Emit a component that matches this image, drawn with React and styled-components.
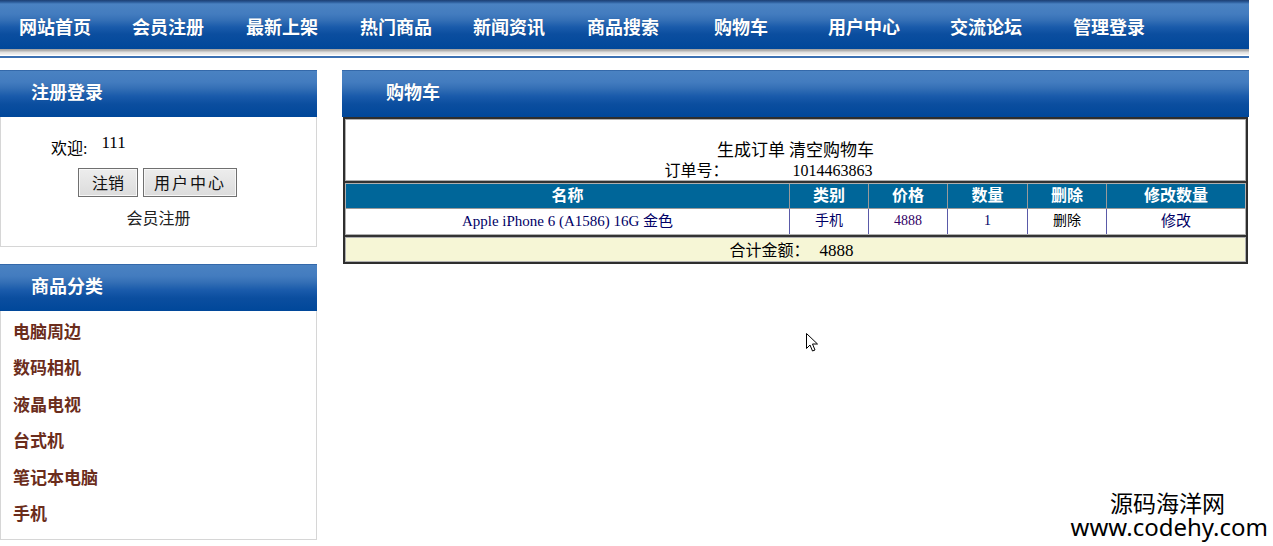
import React from "react";
import styled, { createGlobalStyle } from "styled-components";

const Global = createGlobalStyle`
  html, body { margin: 0; padding: 0; background: #fff; }
  body { font-family: "Liberation Serif", "Noto Sans CJK SC", serif; color: #000; }
`;

const Page = styled.div`
  position: relative;
  width: 1273px;
  height: 546px;
  overflow: hidden;
`;

const Top = styled.div`
  width: 1249px;
`;

const NavBar = styled.nav`
  height: 49px;
  display: flex;
  align-items: center;
  padding-left: 19px;
  box-sizing: border-box;
  background: linear-gradient(
    #1d3f72 0px, #2a5a98 2px, #4a82c2 4px, #437cbf 14px, #3570b6 20px,
    #1a5bab 27px, #0b4e9f 34px, #00479a 49px
  );
`;

const NavItem = styled.a`
  flex: none;
  width: ${(p) => p.$w}px;
  color: #fff;
  font-size: 18px;
  font-weight: bold;
  text-decoration: none;
  white-space: nowrap;
  padding-top: 3px;
  text-shadow: 0 0 1px rgba(0, 0, 0, 0.2);
`;

const Strip = styled.div`
  height: 9px;
  background: linear-gradient(
    #9c9c9c 0px, #b8b8b8 2px, #dcdcdc 3px, #ececec 5px, #f4f4f4 6px,
    #ffffff 6px, #ffffff 7px, #3b70b2 7px, #3b70b2 9px
  );
`;

const Content = styled.div`
  display: flex;
  gap: 25px;
  margin-top: 12px;
  width: 1249px;
`;

const Sidebar = styled.aside`
  width: 317px;
  display: flex;
  flex-direction: column;
  gap: 17px;
`;

const PanelHead = styled.div`
  height: 47px;
  display: flex;
  align-items: center;
  padding-left: ${(p) => p.$pad}px;
  padding-bottom: 5px;
  color: #fff;
  font-size: 18px;
  font-weight: bold;
  background: linear-gradient(
    #1d4f92 0px, #4a82c2 1px, #437cbf 12px, #3570b6 18px,
    #1a5bab 26px, #0b4e9f 34px, #00479a 47px
  );
  box-sizing: border-box;
  text-shadow: 0 0 1px rgba(0, 0, 0, 0.2);
`;

const SideBody = styled.div`
  height: ${(p) => p.$h}px;
  box-sizing: border-box;
  border: 1px solid #d6d6d6;
  border-top: none;
`;

const LoginBody = styled(SideBody)`
  display: flex;
  flex-direction: column;
  align-items: center;
  padding-top: 16px;
`;

const WelcomeRow = styled.div`
  display: flex;
  align-items: flex-start;
  width: 100%;
  padding-left: 50px;
  box-sizing: border-box;
  font-size: 16px;
  height: 35px;
`;

const WelcomeLabel = styled.span`
  margin-top: 2px;
`;

const WelcomeName = styled.span`
  margin-left: 14px;
  font-size: 17px;
`;

const ButtonRow = styled.div`
  display: flex;
  gap: 5px;
  margin-left: -2px;
`;

const Btn = styled.button`
  width: ${(p) => p.$w}px;
  height: 29px;
  font-family: "Noto Sans CJK SC", "Liberation Sans", sans-serif;
  font-size: 16px;
  letter-spacing: ${(p) => p.$ls || 0}px;
  color: #111;
  background: linear-gradient(#ededed, #dcdcdc);
  border: 1px solid #707070;
  box-shadow: inset 0 0 0 1px #f8f8f8;
  padding: 0;
  line-height: 27px;
`;

const RegLink = styled.div`
  margin-top: 8px;
  font-family: "Noto Sans CJK SC", sans-serif;
  font-size: 16px;
  color: #222;
`;

const CatBody = styled(SideBody)`
  padding-top: 4px;
`;

const CatItem = styled.div`
  height: 36.4px;
  line-height: 36px;
  padding-left: 12px;
  font-size: 17px;
  font-weight: bold;
  color: #6b2d1c;
`;

const Main = styled.main`
  width: 907px;
`;

const Frame = styled.div`
  margin: 0 1px;
  border: 2px solid #2e2e2e;
  box-sizing: border-box;
  background: #333;
  display: flex;
  flex-direction: column;
  gap: 2px;
`;

const OrderInfo = styled.div`
  background: #fff;
  border: 1px solid #b0b0b0;
  height: 62px;
  box-sizing: border-box;
  padding-top: 19px;
  font-size: 16px;
  font-family: "Noto Sans CJK SC", "Liberation Serif", serif;
  text-align: center;
  line-height: 20px;
`;

const OrderLine = styled.div`
  padding-right: ${(p) => p.$shift || 0}px;
  font-size: ${(p) => p.$fs || 16}px;
`;

const OrderNo = styled.span`
  font-family: "Liberation Serif", serif;
  font-size: 16px;
  margin-left: 64px;
`;

const Grid = styled.div`
  display: grid;
  grid-template-columns: 443px 79px 79px 80px 79px 1fr;
  border: 1px solid #b0b0b0;
  background: #fff;
`;

const HeadCell = styled.div`
  height: 24px;
  line-height: 23px;
  background: #006699;
  color: #fff;
  font-weight: bold;
  font-size: 16px;
  text-align: center;
  border-left: ${(p) => (p.$first ? "none" : "1px solid #9a9a9a")};
  border-bottom: 1px solid #9a9a9a;
`;

const DataCell = styled.div`
  height: 25px;
  line-height: 24px;
  text-align: center;
  font-size: ${(p) => p.$fs || 14}px;
  color: ${(p) => p.$c || "#000066"};
  border-left: ${(p) => (p.$first ? "none" : "1px solid #5a5aa8")};
`;

const TotalRow = styled.div`
  height: 25px;
  line-height: 23px;
  box-sizing: border-box;
  border: 1px solid #b0b0b0;
  background: #f6f6d6;
  text-align: center;
  font-size: 16px;
  font-family: "Noto Sans CJK SC", serif;
  padding-right: 8px;
`;

const TotalNum = styled.span`
  font-family: "Liberation Serif", serif;
  font-size: 17px;
  margin-left: 10px;
`;

const Watermark = styled.div`
  position: absolute;
  right: 5px;
  bottom: 8px;
  text-align: right;
  font-family: "Noto Sans", "Noto Sans CJK SC", sans-serif;
  color: #000;
`;

const WmTitle = styled.div`
  font-family: "Noto Sans CJK SC", sans-serif;
  font-size: 23px;
  line-height: 24px;
  height: 24px;
  margin-bottom: 2px;
  padding-right: 43px;
`;

const WmUrl = styled.div`
  font-size: 24px;
  line-height: 22px;
  height: 22px;
`;

const Cursor = styled.svg`
  position: absolute;
  left: 806px;
  top: 333px;
`;

const navItems = [
  ["网站首页", 113],
  ["会员注册", 114],
  ["最新上架", 114],
  ["热门商品", 113],
  ["新闻资讯", 114],
  ["商品搜索", 127],
  ["购物车", 114],
  ["用户中心", 122],
  ["交流论坛", 123],
  ["管理登录", 100],
];

const cats = ["电脑周边", "数码相机", "液晶电视", "台式机", "笔记本电脑", "手机"];

export default function App() {
  return (
    <Page>
      <Global />
      <Top>
        <NavBar>
          {navItems.map(([t, w]) => (
            <NavItem key={t} $w={w}>{t}</NavItem>
          ))}
        </NavBar>
        <Strip />
      </Top>
      <Content>
        <Sidebar>
          <div>
            <PanelHead $pad={31}>注册登录</PanelHead>
            <LoginBody $h={130}>
              <WelcomeRow>
                <WelcomeLabel>欢迎:</WelcomeLabel>
                <WelcomeName>111</WelcomeName>
              </WelcomeRow>
              <ButtonRow>
                <Btn $w={60}>注销</Btn>
                <Btn $w={94} $ls={2}>用户中心</Btn>
              </ButtonRow>
              <RegLink>会员注册</RegLink>
            </LoginBody>
          </div>
          <div>
            <PanelHead $pad={31}>商品分类</PanelHead>
            <CatBody $h={229}>
              {cats.map((c) => (
                <CatItem key={c}>{c}</CatItem>
              ))}
            </CatBody>
          </div>
        </Sidebar>
        <Main>
          <PanelHead $pad={44}>购物车</PanelHead>
          <Frame>
            <OrderInfo>
              <OrderLine $fs={17}>生成订单 清空购物车</OrderLine>
              <OrderLine $shift={54}>
                订单号：<OrderNo>1014463863</OrderNo>
              </OrderLine>
            </OrderInfo>
            <Grid>
              <HeadCell $first>名称</HeadCell>
              <HeadCell>类别</HeadCell>
              <HeadCell>价格</HeadCell>
              <HeadCell>数量</HeadCell>
              <HeadCell>删除</HeadCell>
              <HeadCell>修改数量</HeadCell>
              <DataCell $first $fs={15}>Apple iPhone 6 (A1586) 16G 金色</DataCell>
              <DataCell>手机</DataCell>
              <DataCell $c="#330066">4888</DataCell>
              <DataCell>1</DataCell>
              <DataCell $c="#000">删除</DataCell>
              <DataCell $fs={15}>修改</DataCell>
            </Grid>
            <TotalRow>
              合计金额：<TotalNum>4888</TotalNum>
            </TotalRow>
          </Frame>
        </Main>
      </Content>
      <Cursor width="13" height="20" viewBox="0 0 13 20">
        <path d="M0.5 0.5 L0.5 15.5 L4 12 L6.5 18 L9 17 L6.5 11 L11.5 11 Z" fill="#fff" stroke="#000" strokeWidth="1" />
      </Cursor>
      <Watermark>
        <WmTitle>源码海洋网</WmTitle>
        <WmUrl>www.codehy.com</WmUrl>
      </Watermark>
    </Page>
  );
}
